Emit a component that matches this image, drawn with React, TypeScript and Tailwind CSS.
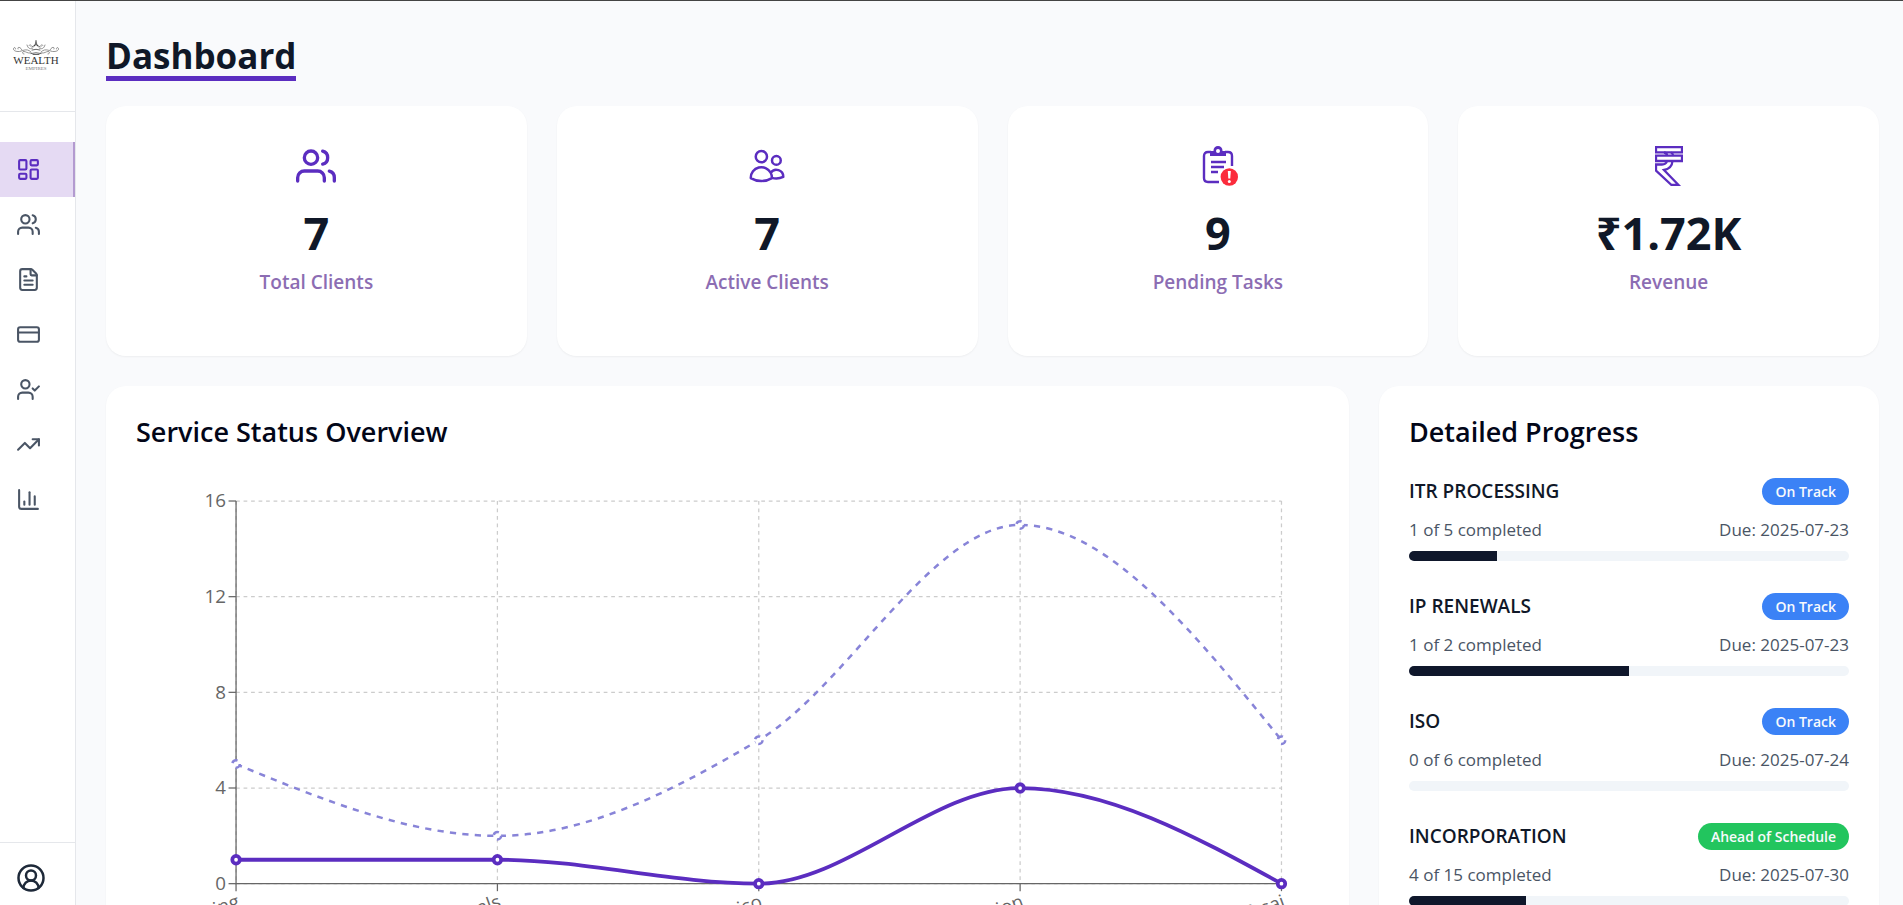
import type { ReactNode } from "react";
import {
  ChartColumn,
  CircleUserRound,
  CreditCard,
  FileText,
  LayoutDashboard,
  TrendingUp,
  UserCheck,
  Users,
} from "lucide-react";
import { FiUsers } from "react-icons/fi";
import { HiOutlineUsers } from "react-icons/hi2";

const navItems = [
  { label: "Dashboard", icon: LayoutDashboard, active: true },
  { label: "Clients", icon: Users, active: false },
  { label: "Documents", icon: FileText, active: false },
  { label: "Payments", icon: CreditCard, active: false },
  { label: "Assignments", icon: UserCheck, active: false },
  { label: "Growth", icon: TrendingUp, active: false },
  { label: "Reports", icon: ChartColumn, active: false },
];

function Logo() {
  return (
    <svg viewBox="0 1 48 32" className="h-8 w-12" fill="none" role="img" aria-label="Wealth Empires">
      <g stroke="#666" strokeWidth="0.7" strokeLinecap="round">
        <path d="M24 0.500V2.500M24 3L22.500 7M24 3L25.500 7M20 8L24 5.500L28 8" stroke="#222" />
        <path d="M15 6C16 10 19 10.500 21 9M33 6C32 10 29 10.500 27 9M17 6.500C18 5 20 6 19 7.500M31 6.500C30 5 28 6 29 7.500" />
        <path d="M20 11Q24 9.500 28 11M19 14.500Q24 13 29 14.500M21 15.500H27" stroke="#222" />
        <path d="M19 13C14 8 10 13 6 12.500C3 12.500 1 11 1.500 9.500C2 8 4 8.500 3.500 10M10 11C8 7 5 8 6 10M12 15C10 15 10 12.500 12 12.500C14 12.500 15 14.500 19 14" />
        <path d="M29 13C34 8 38 13 42 12.500C45 12.500 47 11 46.500 9.500C46 8 44 8.500 44.500 10M38 11C40 7 43 8 42 10M36 15C38 15 38 12.500 36 12.500C34 12.500 33 14.500 29 14" />
      </g>
      <text x="24" y="25" textAnchor="middle" fontSize="11" fill="#333" className="font-['Liberation_Serif',serif]">WEALTH</text>
      <text x="24" y="31" textAnchor="middle" fontSize="5" fill="#777" className="font-['Liberation_Serif',serif]">EMPIRES</text>
    </svg>
  );
}

function Sidebar() {
  return (
    <aside className="flex w-[76px] shrink-0 flex-col border-r border-gray-200 bg-white">
      <div className="flex h-[111px] items-center border-b border-gray-200 pl-3">
        <Logo />
      </div>
      <nav className="flex flex-1 flex-col pt-[30px]">
        {navItems.map(({ label, icon: Icon, active }) => (
          <a
            key={label}
            href="#"
            aria-label={label}
            className={
              active
                ? "flex h-[55px] items-center border-r-2 border-[#b39ad0] bg-[#e5daf3] pl-4 text-[#5b2dc0]"
                : "flex h-[55px] items-center pl-4 text-gray-600"
            }
          >
            <Icon className="size-[25px]" />
          </a>
        ))}
      </nav>
      <div className="flex h-[63px] items-center border-t border-gray-200 pt-2 pl-4">
        <button type="button" aria-label="Account" className="text-gray-800">
          <CircleUserRound className="size-[30px]" />
        </button>
      </div>
    </aside>
  );
}

function PendingIcon() {
  return (
    <svg viewBox="-5 0 40 40" className="size-10" fill="none" stroke="#5b2dc0" strokeWidth="2.4">
      <path d="M8 6H5Q1 6 1 10V32Q1 36 5 36H16M22 6H25Q29 6 29 10V20" />
      <path d="M7 5H11A4.500 4.500 0 0 1 19 5H23V10H7Z" fill="#5b2dc0" stroke="none" />
      <circle cx="15" cy="4.500" r="3.300" fill="#5b2dc0" />
      <circle cx="15" cy="5" r="2" fill="#fff" stroke="none" />
      <path d="M8 16H23M8 21H21M8 26H15" />
      <circle cx="26.300" cy="31" r="10" fill="#fff" stroke="none" />
      <circle cx="26.300" cy="31" r="8.700" fill="#fb2c3c" stroke="none" />
      <path d="M24.800 25H27.800L27.300 32.500H25.300Z" fill="#fff" stroke="none" />
      <circle cx="26.300" cy="35.500" r="1.500" fill="#fff" stroke="none" />
    </svg>
  );
}

function RupeeIcon() {
  return (
    <svg viewBox="0 0 28 40" className="h-10 w-7" fill="none" stroke="#5b2dc0" strokeWidth="2.3">
      <path d="M1 1H27V6.300H1ZM1 9.700H27V15H1Z" />
      <path d="M9 6.500Q12 7 12 9.500M16 6.500Q18 7.500 18 9.500" />
      <path d="M12 15Q11 18.500 7 18.500H1V24.500L16.500 39H23.500L9 24Q17 22.500 17.500 15" />
    </svg>
  );
}

function StatCard({ icon, value, label }: { icon: ReactNode; value: string; label: string }) {
  return (
    <section className="flex h-[250px] flex-col items-center rounded-[20px] bg-white pt-10 shadow-xs">
      <div className="flex h-10 items-center text-[#5b2dc0]">{icon}</div>
      <p className="mt-[19px] text-[45px] leading-[56px] font-bold text-gray-900">{value}</p>
      <p className="mt-[7px] text-[19px] leading-7 font-semibold text-[#8c6db3]">{label}</p>
    </section>
  );
}

type Point = { x: number; y: number };

const plot = { left: 80, right: 916, top: 20, bottom: 326 };
const services = ["itr processing", "ip renewals", "iso", "incorporation", "fssai"];
const totals = [5, 2, 6, 15, 6];
const completed = [1, 1, 0, 4, 0];
const ticks = [0, 4, 8, 12, 16];

const xAt = (i: number) => plot.left + ((plot.right - plot.left) * i) / (services.length - 1);
const yAt = (v: number) => plot.bottom - ((plot.bottom - plot.top) * v) / 16;
const toPoints = (values: number[]): Point[] => values.map((v, i) => ({ x: xAt(i), y: yAt(v) }));

// Monotone cubic interpolation for evenly spaced points
function monotonePath(points: Point[]): string {
  const n = points.length;
  const slope = points.slice(1).map((p, i) => (p.y - points[i].y) / (p.x - points[i].x));
  const tangent = points.map((_, i) => {
    if (i === 0 || i === n - 1) return 0;
    const a = slope[i - 1];
    const b = slope[i];
    return (Math.sign(a) + Math.sign(b)) * Math.min(Math.abs(a), Math.abs(b), Math.abs(a + b) / 4);
  });
  tangent[0] = (3 * slope[0] - tangent[1]) / 2;
  tangent[n - 1] = (3 * slope[n - 2] - tangent[n - 2]) / 2;
  let d = `M${points[0].x},${points[0].y}`;
  for (let i = 1; i < n; i++) {
    const p = points[i - 1];
    const q = points[i];
    const dx = (q.x - p.x) / 3;
    d += `C${p.x + dx},${p.y + dx * tangent[i - 1]} ${q.x - dx},${q.y - dx * tangent[i]} ${q.x},${q.y}`;
  }
  return d;
}

function StatusChart() {
  const totalPoints = toPoints(totals);
  const completedPoints = toPoints(completed);
  return (
    <svg viewBox="0 0 946 400" className="mt-7 w-full" fill="none" role="img" aria-label="Service status">
      <g stroke="#ccc" strokeDasharray="3 3">
        {ticks.map((t) => (
          <line key={t} x1={plot.left} x2={plot.right} y1={yAt(t)} y2={yAt(t)} />
        ))}
        {services.map((s, i) => (
          <line key={s} x1={xAt(i)} x2={xAt(i)} y1={plot.top} y2={plot.bottom} />
        ))}
      </g>
      <g stroke="#666">
        <path d={`M${plot.left} ${plot.top}V${plot.bottom}H${plot.right}`} />
        {ticks.map((t) => (
          <line key={t} x1={plot.left - 6} x2={plot.left} y1={yAt(t)} y2={yAt(t)} />
        ))}
        {services.map((s, i) => (
          <line key={s} x1={xAt(i)} x2={xAt(i)} y1={plot.bottom} y2={plot.bottom + 6} />
        ))}
      </g>
      <g fill="#666" fontSize="15" textAnchor="end">
        {ticks.map((t) => (
          <text key={t} x={plot.left - 8} y={yAt(t) + 5}>{t}</text>
        ))}
        {services.map((s, i) => (
          <text key={s} transform={`translate(${xAt(i)} ${plot.bottom + 8}) rotate(-20)`} y="11">{s}</text>
        ))}
      </g>
      <g stroke="#8884d8" strokeWidth="2" strokeDasharray="5 5">
        <path d={monotonePath(totalPoints)} />
        {totalPoints.map((p) => (
          <circle key={p.x} cx={p.x} cy={p.y} r="3" fill="#fff" />
        ))}
      </g>
      <g stroke="#5b2dc0" strokeWidth="3">
        <path d={monotonePath(completedPoints)} />
        {completedPoints.map((p) => (
          <circle key={p.x} cx={p.x} cy={p.y} r="3" fill="#fff" />
        ))}
      </g>
    </svg>
  );
}

const progress = [
  { name: "ITR PROCESSING", done: 1, total: 5, due: "2025-07-23", status: "On Track" },
  { name: "IP RENEWALS", done: 1, total: 2, due: "2025-07-23", status: "On Track" },
  { name: "ISO", done: 0, total: 6, due: "2025-07-24", status: "On Track" },
  { name: "INCORPORATION", done: 4, total: 15, due: "2025-07-30", status: "Ahead of Schedule" },
];

function ProgressList() {
  return (
    <ul className="mt-[30px] flex flex-col gap-8">
      {progress.map((p) => (
        <li key={p.name}>
          <div className="flex h-[27px] items-center justify-between">
            <h3 className="text-[19px] font-semibold text-gray-900">{p.name}</h3>
            <span
              className={
                p.status === "On Track"
                  ? "rounded-full bg-[#3b82f6] px-[13px] text-[14px] leading-[27px] font-semibold text-slate-50"
                  : "rounded-full bg-[#22c55e] px-[13px] text-[14px] leading-[27px] font-semibold text-slate-50"
              }
            >
              {p.status}
            </span>
          </div>
          <div className="mt-3 flex justify-between text-[17px] leading-[25px] text-gray-600">
            <span>{p.done} of {p.total} completed</span>
            <span>Due: {p.due}</span>
          </div>
          <div className="mt-[9px] h-[10px] overflow-hidden rounded-full bg-slate-100">
            <div className="h-full bg-slate-900" style={{ width: `${(p.done / p.total) * 100}%` }} />
          </div>
        </li>
      ))}
    </ul>
  );
}

export default function App() {
  return (
    <div className="flex h-screen overflow-hidden border-t border-[#444] bg-[#f9fafc] font-['Open_Sans','Noto_Sans',sans-serif]">
      <Sidebar />
      <main className="min-w-0 flex-1 overflow-y-auto pt-[34px] pr-6 pb-[30px] pl-[30px] [scrollbar-width:none]">
        <h1 className="w-fit border-b-5 border-[#5b2dc0] text-[35px] leading-[41px] font-bold text-gray-900">
          Dashboard
        </h1>
        <div className="mt-[25px] grid grid-cols-4 gap-[30px]">
          <StatCard icon={<FiUsers className="size-10" />} value="7" label="Total Clients" />
          <StatCard icon={<HiOutlineUsers className="size-10" />} value="7" label="Active Clients" />
          <StatCard icon={<PendingIcon />} value="9" label="Pending Tasks" />
          <StatCard icon={<RupeeIcon />} value="₹1.72K" label="Revenue" />
        </div>
        <div className="mt-[30px] grid grid-cols-[minmax(0,1fr)_500px] gap-[30px]">
          <section className="rounded-[20px] bg-white p-[30px] shadow-xs">
            <h2 className="text-[27px] leading-8 font-semibold text-slate-950">Service Status Overview</h2>
            <StatusChart />
          </section>
          <section className="rounded-[20px] bg-white p-[30px] shadow-xs">
            <h2 className="text-[27px] leading-8 font-semibold text-slate-950">Detailed Progress</h2>
            <ProgressList />
          </section>
        </div>
      </main>
    </div>
  );
}
